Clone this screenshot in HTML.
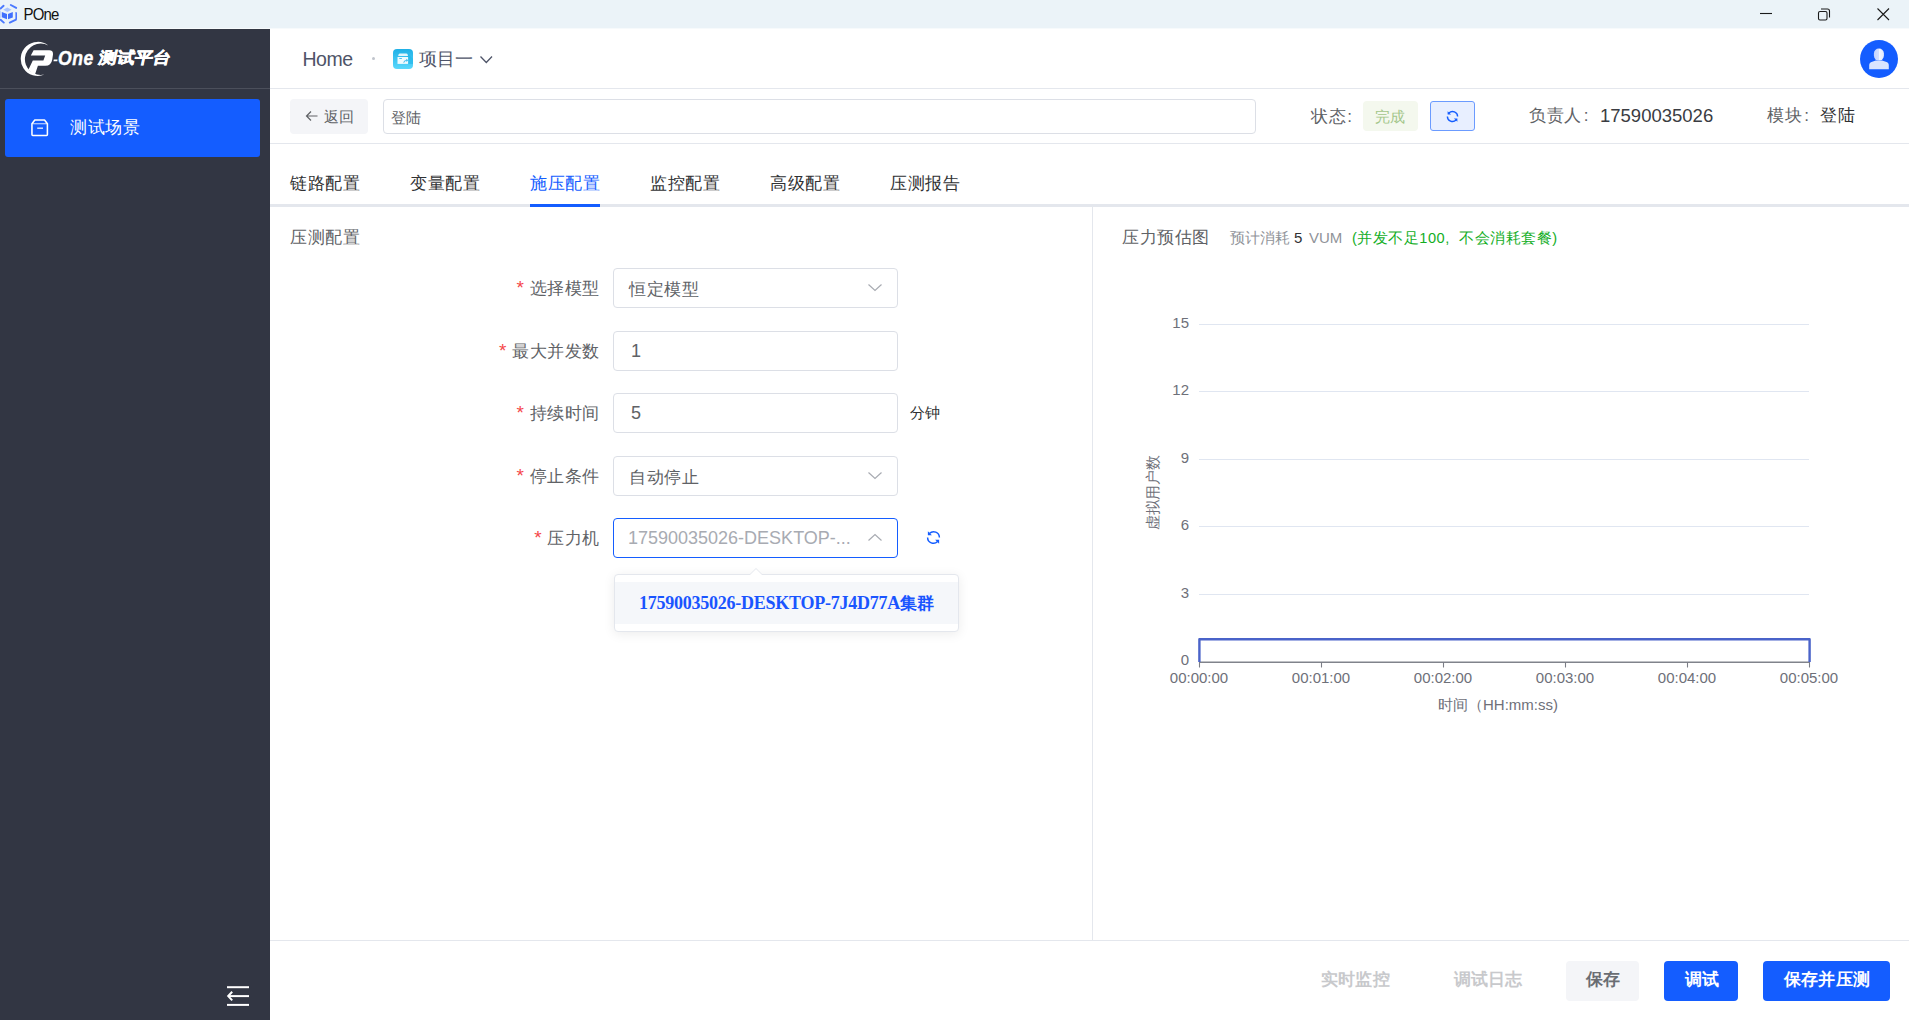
<!DOCTYPE html>
<html><head><meta charset="utf-8">
<style>
*{box-sizing:border-box;margin:0;padding:0}
html,body{width:1909px;height:1020px;overflow:hidden;background:#fff;font-family:"Liberation Sans",sans-serif;color:#303133}
.a{position:absolute;white-space:nowrap}
#title{position:absolute;left:0;top:0;width:1909px;height:28px;background:#ebf3f8}
#tline{position:absolute;left:0;top:28px;width:1909px;height:1px;background:#f7fafc}
#side{position:absolute;left:0;top:29px;width:270px;height:991px;background:#323643}
#sline{position:absolute;left:0;top:59px;width:270px;height:1px;background:#4b4f5b}
#menu{position:absolute;left:5px;top:70px;width:255px;height:58px;background:#145dff;border-radius:3px}
.hline{position:absolute;left:270px;width:1639px;height:1px;background:#e4e7ed}
.btn{position:absolute;border-radius:4px;text-align:center}
.inp{position:absolute;left:613px;width:285px;height:40px;border:1px solid #dcdfe6;border-radius:4px;background:#fff}
.lab{position:absolute;font-size:17px;letter-spacing:0.6px;line-height:20px;color:#606266;text-align:right}
.lab i{font-style:normal;color:#f5474a;margin-right:5px;font-size:19px;display:inline-block;height:20px;line-height:20px;vertical-align:top;position:relative;top:-1px}
.grid{position:absolute;left:1199px;width:610px;height:1px;background:#e0e6f1}
.yl{position:absolute;font-size:15px;line-height:16px;color:#6e7079;text-align:right;width:30px}
.xl{position:absolute;font-size:15px;line-height:16px;color:#6e7079;width:80px;text-align:center}
</style></head><body>
<!-- title bar -->
<div id="title"></div><div id="tline"></div>
<svg class="a" style="left:0;top:3px" width="18" height="22" viewBox="0 3 18 22">
  <path d="M0.6 8.6 L3.6 5.8" stroke="#4a78ff" stroke-width="1.9" stroke-linecap="round"/>
  <path d="M10.8 5 L16.2 7.9" stroke="#4a78ff" stroke-width="1.9" stroke-linecap="round"/>
  <path d="M3.2 9.8 L7.3 7.6 L11.6 9.8 L7.3 12Z" fill="#aac4ff"/>
  <path d="M1.8 12 L7 14 L7 19.2 L1.8 17.2Z" fill="#3f6ffd"/>
  <path d="M8 14 L12.8 12 L12.8 17.6 L8 19.2Z" fill="#3f6ffd"/>
  <path d="M15.4 12 L17 12.5 L17 19 L15.4 19.6Z" fill="#4a78ff"/>
  <path d="M0.6 19.8 L3.8 22.6" stroke="#4a78ff" stroke-width="1.9" stroke-linecap="round"/>
  <path d="M9.8 22.6 L16 19.6" stroke="#4a78ff" stroke-width="1.9" stroke-linecap="round"/>
  <path d="M0.2 10.5 L1 10.8 L1 18 L0.2 17.7Z" fill="#b9cdfc"/>
</svg>
<div class="a" style="left:23.5px;top:6px;font-size:15px;line-height:18px;color:#111;letter-spacing:-0.8px;transform:scaleY(1.05);transform-origin:0 100%">POne</div>
<svg class="a" style="left:1755px;top:3px" width="140" height="22" viewBox="0 0 140 22">
  <line x1="5" y1="10.5" x2="17" y2="10.5" stroke="#1a1a1a" stroke-width="1.1"/>
  <rect x="63.5" y="8.5" width="8.5" height="8.5" rx="1.5" fill="none" stroke="#1a1a1a" stroke-width="1.1"/>
  <path d="M66 6 L72.5 6 Q74.5 6 74.5 8 L74.5 14.5" fill="none" stroke="#1a1a1a" stroke-width="1.1"/>
  <path d="M122.5 5.5 L134 17 M134 5.5 L122.5 17" stroke="#1a1a1a" stroke-width="1.1"/>
</svg>

<!-- sidebar -->
<div id="side">
  <div id="sline"></div>
  <svg class="a" style="left:16px;top:9px" width="80" height="40" viewBox="16 38 80 40">
    <path d="M48.3 45.5 A17.05 17.05 0 1 0 44.5 74.6 A15.77 15.77 0 1 1 48.3 45.5Z" fill="#fff"/>
    <path d="M33.6 50.2 L49.2 50.2 Q53.4 50.2 53 54.6 L52.2 59.8 Q51.2 65.8 45.3 65.8 L37.9 65.8 L35 74.4 L33.2 74.4 L28.5 69.5 L32.8 60.6 L43.4 60.6 L45.2 55.6 L30.8 55.6Z" fill="#fff"/>
    <rect x="53.7" y="59.6" width="3.8" height="1.6" fill="#fff" transform="skewX(-12)" style="transform-origin:55px 60px"/>
  </svg>
  <div class="a" style="left:58px;top:17px;font-size:20px;line-height:24px;color:#fff;font-weight:bold;font-style:italic;letter-spacing:0.6px;transform:scaleX(0.88);transform-origin:0 0;-webkit-text-stroke:0.4px #fff">One</div>
  <div class="a" style="left:97px;top:15px;font-size:18px;line-height:24px;color:#fff;font-weight:900;-webkit-text-stroke:0.6px #fff;transform:skewX(-12deg) scaleY(0.88);transform-origin:0 100%">测试平台</div>
  <div id="menu">
    <svg class="a" style="left:26px;top:20px" width="17.5" height="17.5" viewBox="0 0 17.5 17.5">
      <path d="M0.95 4.7 L3.8 0.95 L13.5 0.95 L16.4 4.7 L16.4 15.6 Q16.4 16.4 15.6 16.4 L1.75 16.4 Q0.95 16.4 0.95 15.6 Z" fill="none" stroke="#fff" stroke-width="1.55" stroke-linejoin="round"/>
      <line x1="1.5" y1="4.75" x2="15.9" y2="4.75" stroke="#fff" stroke-width="1.05" opacity="0.8"/>
      <line x1="6.2" y1="9.2" x2="12" y2="9.2" stroke="#fff" stroke-width="1.4" opacity="0.85"/>
    </svg>
    <div class="a" style="left:65px;top:17px;font-size:17px;letter-spacing:0.6px;line-height:24px;color:#fff">测试场景</div>
  </div>
  <svg class="a" style="left:226px;top:956px" width="24" height="22" viewBox="0 0 24 22">
    <line x1="1" y1="2.2" x2="23" y2="2.2" stroke="#fff" stroke-width="2"/>
    <line x1="2.5" y1="11.1" x2="23" y2="11.1" stroke="#fff" stroke-width="2"/>
    <line x1="1" y1="19.9" x2="23" y2="19.9" stroke="#fff" stroke-width="2"/>
    <path d="M6.2 6.8 L2.2 11.1 L6.2 15.4" fill="none" stroke="#fff" stroke-width="2"/>
  </svg>
</div>

<!-- header -->
<div class="hline" style="top:88px"></div>
<div class="a" style="left:302.5px;top:47px;font-size:19.5px;letter-spacing:-0.5px;line-height:24px;color:#4e5468">Home</div>
<div class="a" style="left:372px;top:57px;width:3px;height:3px;border-radius:2px;background:#c0c4cc"></div>
<svg class="a" style="left:393px;top:49px" width="20" height="20" viewBox="0 0 20 20">
  <defs><linearGradient id="g1" x1="0" y1="0" x2="0" y2="1"><stop offset="0" stop-color="#1fb0e6"/><stop offset="1" stop-color="#5ad8fc"/></linearGradient></defs>
  <rect x="0" y="0" width="20" height="20" rx="4" fill="url(#g1)"/>
  <path d="M9.5 15 L20 15 L20 10 L15.5 5 Z" fill="#1db3e8" opacity="0.55"/>
  <path d="M5.2 6.9 L5.6 5.4 Q5.9 4.4 7 4.4 L13.2 4.4 Q14.3 4.4 14.6 5.4 L15 6.9Z" fill="#fff" opacity="0.85"/>
  <rect x="4.5" y="8" width="10.6" height="6.9" fill="#fff" opacity="0.92"/>
  <rect x="6.2" y="9.1" width="2.8" height="1" rx="0.5" fill="#4cc0ef"/>
  <path d="M10.6 13.6 Q11.5 11.4 14 11.2" stroke="#4cc0ef" stroke-width="1.1" fill="none"/>
  <path d="M13.2 9.8 L15.4 11.2 L13.4 12.9Z" fill="#4cc0ef"/>
</svg>
<div class="a" style="left:419px;top:47px;font-size:18px;line-height:24px;color:#4e5468">项目一</div>
<svg class="a" style="left:479px;top:54.5px" width="15" height="10" viewBox="0 0 15 10">
  <path d="M1.5 1.5 L7.3 7.5 L13 1.5" fill="none" stroke="#4e5468" stroke-width="1.3"/>
</svg>
<svg class="a" style="left:1860px;top:40px" width="38" height="38" viewBox="0 0 38 38">
  <defs><linearGradient id="g2" x1="0" y1="0" x2="1" y2="0"><stop offset="0" stop-color="#c6d5ff"/><stop offset="0.5" stop-color="#d3dfff"/><stop offset="0.52" stop-color="#f4f7ff"/><stop offset="1" stop-color="#e2eaff"/></linearGradient></defs>
  <circle cx="19" cy="19" r="19" fill="#145dff"/>
  <rect x="13.9" y="8.6" width="10" height="12" rx="5" fill="url(#g2)"/>
  <path d="M9.2 29.2 L9.2 25.2 C9.2 23.2 10.2 22.3 12.2 21.7 L15.8 20.4 L22 20.4 L25.8 21.7 C27.8 22.3 28.8 23.2 28.8 25.2 L28.8 29.2 Z" fill="#dbe5ff"/>
</svg>

<!-- toolbar -->
<div class="hline" style="top:143px"></div>
<div class="btn" style="left:290px;top:99px;width:78px;height:35px;background:#f4f5f8"></div>
<svg class="a" style="left:305px;top:110px" width="14" height="12" viewBox="0 0 14 12">
  <path d="M12.5 6 L1.5 6 M6 1.5 L1.5 6 L6 10.5" fill="none" stroke="#606266" stroke-width="1.2"/>
</svg>
<div class="a" style="left:323.5px;top:107px;font-size:14.6px;line-height:20px;color:#606266">返回</div>
<div class="a" style="left:383px;top:99px;width:873px;height:35px;border:1px solid #dcdfe6;border-radius:4px"></div>
<div class="a" style="left:391px;top:108px;font-size:14.6px;line-height:20px;color:#606266">登陆</div>
<div class="a" style="left:1311px;top:105px;font-size:17px;letter-spacing:0.6px;line-height:24px;color:#606266">状态<span style="margin-left:1px">:</span></div>
<div class="btn" style="left:1363px;top:101px;width:55px;height:30px;background:#f4f8ee"></div>
<div class="a" style="left:1375px;top:107px;font-size:14.6px;line-height:20px;color:#a3c68a">完成</div>
<div class="btn" style="left:1430px;top:101px;width:45px;height:30px;background:#e8efff;border:1px solid #6b9bff;border-radius:3px"></div>
<svg class="a" style="left:1446px;top:109.5px" width="13" height="13" viewBox="0 0 15 15">
  <path d="M3.4 3.4 A5.9 5.9 0 0 1 13.4 7.6 M1.6 7.4 A5.9 5.9 0 0 0 11.6 11.6" fill="none" stroke="#145dff" stroke-width="1.6"/>
  <path d="M1.9 1.3 L1.9 5.3 L5.9 5.2Z" fill="#145dff"/>
  <path d="M13.1 13.7 L13.1 9.7 L9.1 9.8Z" fill="#145dff"/>
</svg>
<div class="a" style="left:1529px;top:104px;font-size:17px;letter-spacing:0.6px;line-height:24px;color:#606266">负责人<span style="display:inline-block;width:17px;padding-left:2px">:</span></div>
<div class="a" style="left:1600px;top:104px;font-size:18.5px;line-height:24px;color:#3a3c42">17590035026</div>
<div class="a" style="left:1767px;top:104px;font-size:17px;letter-spacing:0.6px;line-height:24px;color:#606266">模块<span style="display:inline-block;width:17px;padding-left:2px">:</span></div>
<div class="a" style="left:1820px;top:104px;font-size:17px;letter-spacing:0.6px;line-height:24px;color:#303133">登陆</div>

<!-- tabs -->
<div class="a" style="left:270px;top:204px;width:1639px;height:3px;background:#e4e7ed"></div>
<div class="a" style="left:530px;top:204px;width:70px;height:3px;background:#145dff"></div>
<div class="a" style="left:290px;top:172px;font-size:17px;letter-spacing:0.6px;line-height:24px;color:#303133">链路配置</div>
<div class="a" style="left:410px;top:172px;font-size:17px;letter-spacing:0.6px;line-height:24px;color:#303133">变量配置</div>
<div class="a" style="left:530px;top:172px;font-size:17px;letter-spacing:0.6px;line-height:24px;color:#145dff">施压配置</div>
<div class="a" style="left:650px;top:172px;font-size:17px;letter-spacing:0.6px;line-height:24px;color:#303133">监控配置</div>
<div class="a" style="left:770px;top:172px;font-size:17px;letter-spacing:0.6px;line-height:24px;color:#303133">高级配置</div>
<div class="a" style="left:890px;top:172px;font-size:17px;letter-spacing:0.6px;line-height:24px;color:#303133">压测报告</div>

<!-- content dividers -->
<div class="a" style="left:1092px;top:207px;width:1px;height:733px;background:#e4e7ed"></div>
<div class="hline" style="top:940px"></div>

<!-- left form -->
<div class="a" style="left:290px;top:226px;font-size:17px;letter-spacing:0.6px;line-height:24px;color:#606266">压测配置</div>

<div class="lab" style="left:400px;top:279px;width:200px"><i>*</i>选择模型</div>
<div class="inp" style="top:268px"></div>
<div class="a" style="left:629px;top:277.5px;font-size:17px;letter-spacing:0.6px;line-height:24px;color:#606266">恒定模型</div>
<svg class="a" style="left:867px;top:283px" width="16" height="10" viewBox="0 0 16 10"><path d="M1.5 1.5 L8 7.5 L14.5 1.5" fill="none" stroke="#a8abb2" stroke-width="1.2"/></svg>

<div class="lab" style="left:400px;top:342px;width:200px"><i>*</i>最大并发数</div>
<div class="inp" style="top:331px"></div>
<div class="a" style="left:631px;top:339px;font-size:18px;line-height:24px;color:#606266">1</div>

<div class="lab" style="left:400px;top:404px;width:200px"><i>*</i>持续时间</div>
<div class="inp" style="top:393px"></div>
<div class="a" style="left:631px;top:401px;font-size:18px;line-height:24px;color:#606266">5</div>
<div class="a" style="left:910px;top:403px;font-size:14.6px;line-height:20px;color:#303133">分钟</div>

<div class="lab" style="left:400px;top:467px;width:200px"><i>*</i>停止条件</div>
<div class="inp" style="top:456px"></div>
<div class="a" style="left:629px;top:465.5px;font-size:17px;letter-spacing:0.6px;line-height:24px;color:#606266">自动停止</div>
<svg class="a" style="left:867px;top:471px" width="16" height="10" viewBox="0 0 16 10"><path d="M1.5 1.5 L8 7.5 L14.5 1.5" fill="none" stroke="#a8abb2" stroke-width="1.2"/></svg>

<div class="lab" style="left:400px;top:529px;width:200px"><i>*</i>压力机</div>
<div class="inp" style="top:518px;border-color:#145dff"></div>
<div class="a" style="left:628px;top:526px;font-size:18px;line-height:24px;color:#a8abb2">17590035026-DESKTOP-...</div>
<svg class="a" style="left:867px;top:532px" width="16" height="10" viewBox="0 0 16 10"><path d="M1.5 8.5 L8 2.5 L14.5 8.5" fill="none" stroke="#a8abb2" stroke-width="1.2"/></svg>
<svg class="a" style="left:926px;top:530px" width="15" height="15" viewBox="0 0 15 15">
  <path d="M3.4 3.4 A5.9 5.9 0 0 1 13.4 7.6 M1.6 7.4 A5.9 5.9 0 0 0 11.6 11.6" fill="none" stroke="#145dff" stroke-width="1.45"/>
  <path d="M1.9 1.3 L1.9 5.3 L5.9 5.2Z" fill="#145dff"/>
  <path d="M13.1 13.7 L13.1 9.7 L9.1 9.8Z" fill="#145dff"/>
</svg>

<!-- dropdown -->
<div class="a" style="left:614px;top:574px;width:345px;height:58px;background:#fff;border:1px solid #e4e7ed;border-radius:4px;box-shadow:0 2px 12px rgba(0,0,0,0.08)"></div>
<div class="a" style="left:749px;top:568px;width:0;height:0;border-left:7px solid transparent;border-right:7px solid transparent;border-bottom:7px solid #e4e7ed"></div>
<div class="a" style="left:750px;top:569px;width:0;height:0;border-left:6px solid transparent;border-right:6px solid transparent;border-bottom:6px solid #fff"></div>
<div class="a" style="left:615px;top:582px;width:343px;height:42px;background:#f5f7fa"></div>
<div class="a" style="left:639px;top:590.5px;font-family:'Liberation Serif',serif;font-weight:bold;font-size:18px;letter-spacing:-0.25px;line-height:24px;color:#1a55ff">17590035026-DESKTOP-7J4D77A<span style="font-family:'Liberation Sans',sans-serif;font-size:17px">集群</span></div>

<!-- right chart -->
<div class="a" style="left:1122px;top:226px;font-size:17px;letter-spacing:0.6px;line-height:24px;color:#606266">压力预估图</div>
<div class="a" style="left:1230px;top:228px;font-size:14.6px;line-height:20px;color:#909399">预计消耗</div>
<div class="a" style="left:1294px;top:228px;font-size:15px;line-height:20px;color:#303133">5</div>
<div class="a" style="left:1309px;top:228px;font-size:15px;line-height:20px;color:#909399">VUM</div>
<div class="a" style="left:1352px;top:228px;font-size:14.6px;line-height:20px;color:#13ae1f;letter-spacing:0.5px">(并发不足100<span style="display:inline-block;width:14px">,</span>不会消耗套餐)</div>

<div class="grid" style="top:324px"></div>
<div class="grid" style="top:391px"></div>
<div class="grid" style="top:459px"></div>
<div class="grid" style="top:526px"></div>
<div class="grid" style="top:594px"></div>
<div class="yl" style="left:1159px;top:315px">15</div>
<div class="yl" style="left:1159px;top:382px">12</div>
<div class="yl" style="left:1159px;top:450px">9</div>
<div class="yl" style="left:1159px;top:517px">6</div>
<div class="yl" style="left:1159px;top:585px">3</div>
<div class="yl" style="left:1159px;top:652px">0</div>
<svg class="a" style="left:1190px;top:630px" width="630" height="45" viewBox="0 0 630 45">
  <line x1="9" y1="32.3" x2="620" y2="32.3" stroke="#80838b" stroke-width="1.5"/>
  <line x1="9.5" y1="32" x2="9.5" y2="37.5" stroke="#7a7d86" stroke-width="1.1"/><line x1="131.5" y1="32" x2="131.5" y2="37.5" stroke="#7a7d86" stroke-width="1.1"/><line x1="253.5" y1="32" x2="253.5" y2="37.5" stroke="#7a7d86" stroke-width="1.1"/><line x1="375.5" y1="32" x2="375.5" y2="37.5" stroke="#7a7d86" stroke-width="1.1"/><line x1="497.5" y1="32" x2="497.5" y2="37.5" stroke="#7a7d86" stroke-width="1.1"/><line x1="619.5" y1="32" x2="619.5" y2="37.5" stroke="#7a7d86" stroke-width="1.1"/>
  <path d="M9.4 32 L9.4 9.3 L619.6 9.3 L619.6 32" fill="none" stroke="#4a63c9" stroke-width="2.4" stroke-linejoin="round"/>
</svg>
<div class="xl" style="left:1159px;top:670px">00:00:00</div>
<div class="xl" style="left:1281px;top:670px">00:01:00</div>
<div class="xl" style="left:1403px;top:670px">00:02:00</div>
<div class="xl" style="left:1525px;top:670px">00:03:00</div>
<div class="xl" style="left:1647px;top:670px">00:04:00</div>
<div class="xl" style="left:1769px;top:670px">00:05:00</div>
<div class="a" style="left:1438px;top:696px;font-size:15px;line-height:18px;color:#6e7079">时间（HH:mm:ss)</div>
<div class="a" style="left:1115px;top:484px;width:75px;text-align:center;font-size:15px;line-height:16px;color:#6e7079;transform:rotate(-90deg)">虚拟用户数</div>

<!-- footer -->
<div class="a" style="left:1321px;top:968px;font-size:17px;letter-spacing:0.2px;line-height:24px;color:#c8c9cc;font-weight:600">实时监控</div>
<div class="a" style="left:1453.5px;top:968px;font-size:17px;letter-spacing:0.2px;line-height:24px;color:#c8c9cc;font-weight:600">调试日志</div>
<div class="btn" style="left:1566px;top:961px;width:73px;height:40px;background:#f4f5f8"></div>
<div class="a" style="left:1586px;top:968px;font-size:17px;letter-spacing:0.2px;line-height:24px;color:#6a6d73;font-weight:600">保存</div>
<div class="btn" style="left:1664px;top:961px;width:74px;height:40px;background:#145dff"></div>
<div class="a" style="left:1684.5px;top:968px;font-size:17px;letter-spacing:0.2px;line-height:24px;color:#fff;font-weight:600">调试</div>
<div class="btn" style="left:1763px;top:961px;width:127px;height:40px;background:#145dff"></div>
<div class="a" style="left:1784px;top:968px;font-size:17px;letter-spacing:0.2px;line-height:24px;color:#fff;font-weight:600">保存并压测</div>
</body></html>
